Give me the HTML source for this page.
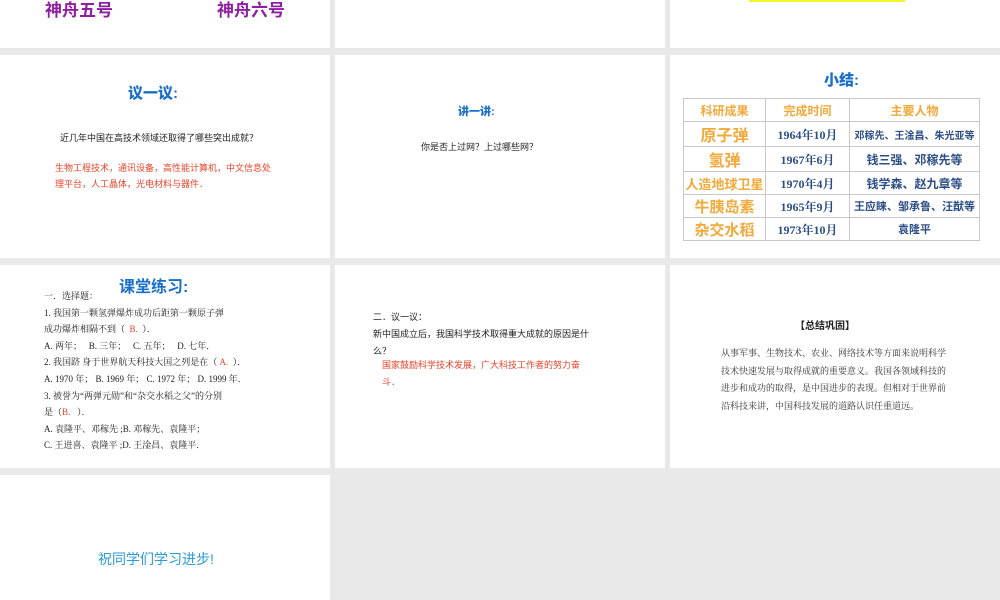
<!DOCTYPE html>
<html><head><meta charset="utf-8"><style>
*{margin:0;padding:0;box-sizing:border-box}
body{width:1000px;height:600px;background:#e9e9e9;position:relative;overflow:hidden;font-family:"Liberation Sans","Noto Sans CJK SC",sans-serif}
.s{position:absolute;background:#fff;overflow:hidden}
.a{position:absolute;white-space:nowrap}
.t{font-family:"Liberation Serif","Noto Serif CJK SC",serif}
table{border-collapse:collapse;position:absolute;left:13px;top:43px;width:297px;table-layout:fixed}
td{border:1px solid #c8c8c8;height:23px;text-align:center;font-weight:bold;white-space:nowrap;padding:0;overflow:hidden}
</style></head><body>
<div class="s" style="left:0;top:0;width:330px;height:48px">
<div class="a" style="left:45px;top:-4px;font-size:17px;font-weight:bold;color:#8e1fa0">神舟五号</div>
<div class="a" style="left:217px;top:-4px;font-size:17px;font-weight:bold;color:#8e1fa0">神舟六号</div>
</div>
<div class="s" style="left:335px;top:0;width:330px;height:48px"></div>
<div class="s" style="left:670px;top:0;width:330px;height:48px">
<div class="a" style="left:79px;top:0;width:156px;height:2px;background:#f4f62a"></div>
</div>
<div class="s" style="left:0;top:55px;width:330px;height:203px">
<div class="a" style="left:128px;top:27px;font-size:15px;font-weight:900;color:#1a6fc8">议一议:</div>
<div class="a" style="left:60px;top:76px;font-size:9px;color:#222">近几年中国在高技术领域还取得了哪些突出成就？</div>
<div class="a" style="left:55px;top:105px;font-size:9px;color:#e8432a;line-height:16px">生物工程技术，通讯设备，高性能计算机，中文信息处<br>理平台，人工晶体，光电材料与器件．</div>
</div>
<div class="s" style="left:335px;top:55px;width:330px;height:203px">
<div class="a" style="left:123px;top:48px;font-size:11px;font-weight:900;color:#1a6fc8">讲一讲:</div>
<div class="a" style="left:86px;top:85px;font-size:9px;color:#222">你是否上过网？上过哪些网？</div>
</div>
<div class="s" style="left:670px;top:55px;width:330px;height:203px">
<div class="a" style="left:154px;top:14px;font-size:15px;font-weight:900;color:#1a6fc8">小结:</div>
<table>
<colgroup><col style="width:82px"><col style="width:84px"><col></colgroup>
<tr style="color:#f1a93a;font-size:12px"><td style="height:22px">科研成果</td><td>完成时间</td><td>主要人物</td></tr>
<tr><td style="color:#f1a93a;font-size:16px;height:24px">原子弹</td><td class="t" style="color:#2c4e86;font-size:12px">1964年10月</td><td style="color:#2c4e86;font-size:10px">邓稼先、王淦昌、朱光亚等</td></tr>
<tr><td style="color:#f1a93a;font-size:16px">氢弹</td><td class="t" style="color:#2c4e86;font-size:12px">1967年6月</td><td style="color:#2c4e86;font-size:12px">钱三强、邓稼先等</td></tr>
<tr><td style="color:#f1a93a;font-size:13px">人造地球卫星</td><td class="t" style="color:#2c4e86;font-size:12px">1970年4月</td><td style="color:#2c4e86;font-size:12px">钱学森、赵九章等</td></tr>
<tr><td style="color:#f1a93a;font-size:15px;height:21px">牛胰岛素</td><td class="t" style="color:#2c4e86;font-size:12px">1965年9月</td><td style="color:#2c4e86;font-size:11px">王应睐、邹承鲁、汪猷等</td></tr>
<tr><td style="color:#f1a93a;font-size:15px">杂交水稻</td><td class="t" style="color:#2c4e86;font-size:12px">1973年10月</td><td style="color:#2c4e86;font-size:11px">袁隆平</td></tr>
</table>
</div>
<div class="s" style="left:0;top:265px;width:330px;height:203px">
<div class="a" style="left:119px;top:8px;font-size:16px;font-weight:bold;color:#1a6fc8">课堂练习:</div>
<div class="a t" style="left:44px;top:23px;font-size:9px;color:#222;line-height:16.6px">一．选择题：<br>1. 我国第一颗氢弹爆炸成功后距第一颗原子弹<br>成功爆炸相隔不到（ <span style="color:#e8432a">&nbsp;B.&nbsp;</span> ）．<br>A. 两年；&nbsp;&nbsp; B. 三年；&nbsp;&nbsp; C. 五年；&nbsp;&nbsp; D. 七年．<br>2. 我国跻 身于世界航天科技大国之列是在（ <span style="color:#e8432a">A.</span>&nbsp;&nbsp;）．<br>A. 1970 年； B. 1969 年； C. 1972 年； D. 1999 年．<br>3. 被誉为“两弹元勋”和“杂交水稻之父”的分别<br>是（<span style="color:#e8432a">B.</span>&nbsp;&nbsp;&nbsp;）．<br>A. 袁隆平、邓稼先 ;B. 邓稼先、袁隆平；<br>C. 王进喜、袁隆平 ;D. 王淦昌、袁隆平．</div>
</div>
<div class="s" style="left:335px;top:265px;width:330px;height:203px">
<div class="a" style="left:38px;top:44px;font-size:9px;color:#222;line-height:17px">二．议一议：<br>新中国成立后，我国科学技术取得重大成就的原因是什<br>么？</div>
<div class="a" style="left:47px;top:92px;font-size:9px;color:#e8432a;line-height:17px">国家鼓励科学技术发展，广大科技工作者的努力奋<br>斗．</div>
</div>
<div class="s" style="left:670px;top:265px;width:330px;height:203px">
<div class="a" style="left:125px;top:52px;font-size:10px;font-weight:bold;color:#222">【总结巩固】</div>
<div class="a t" style="left:51px;top:80px;font-size:9px;color:#333;line-height:17.5px">从事军事、生物技术、农业、网络技术等方面来说明科学<br>技术快速发展与取得成就的重要意义。我国各领域科技的<br>进步和成功的取得，是中国进步的表现。但相对于世界前<br>沿科技来讲，中国科技发展的道路认识任重道远。</div>
</div>
<div class="s" style="left:0;top:475px;width:330px;height:125px">
<div class="a" style="left:98px;top:74px;font-size:14px;color:#2a9bd6">祝同学们学习进步!</div>
</div>
</body></html>
